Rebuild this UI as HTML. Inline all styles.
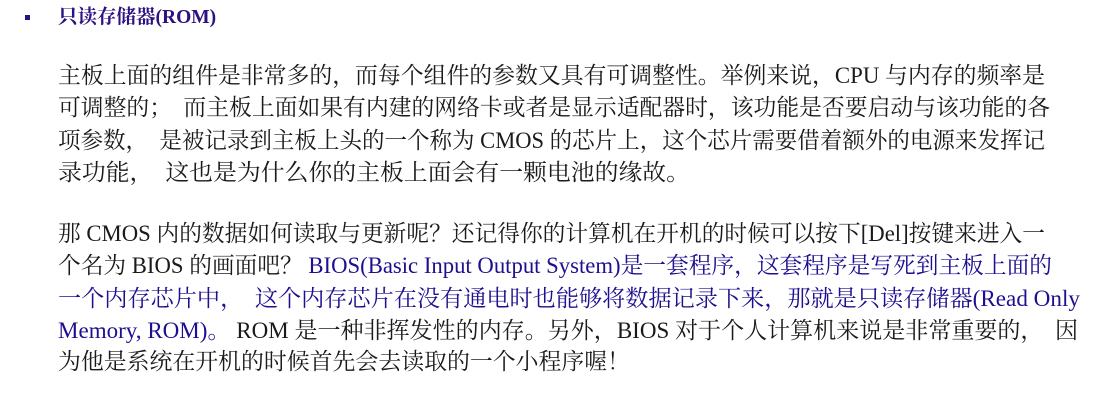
<!DOCTYPE html>
<html><head><meta charset="utf-8"><style>
html,body{margin:0;padding:0;background:#fff;width:1108px;height:403px;overflow:hidden}
body{position:relative;font-family:"Liberation Serif","Noto Serif CJK SC",serif;color:#1a1a1a}
.l{position:absolute;left:58px;height:32px;line-height:32px;font-size:23px;white-space:nowrap;transform-origin:0 50%}
.b{color:#1d0f8f}
h1{position:absolute;left:58px;top:5px;margin:0;font-size:19.5px;line-height:26px;font-weight:bold;color:#2b1280}
.sq{position:absolute;left:25px;top:15px;width:5px;height:5px;background:#2b1280}
</style></head><body>
<div class="sq"></div>
<h1>只读存储器(ROM)</h1>
<div class="l" style="top:60px" title="987">主板上面的组件是非常多的，而每个组件的参数又具有可调整性。举例来说，CPU 与内存的频率是</div>
<div class="l" style="top:92px" title="992">可调整的；　而主板上面如果有内建的网络卡或者是显示适配器时，该功能是否要启动与该功能的各</div>
<div class="l" style="top:125px" title="987">项参数，　是被记录到主板上头的一个称为 CMOS 的芯片上，这个芯片需要借着额外的电源来发挥记</div>
<div class="l" style="top:157px" title="632">录功能，　这也是为什么你的主板上面会有一颗电池的缘故。</div>
<div class="l" style="top:218px" title="987">那 CMOS 内的数据如何读取与更新呢？还记得你的计算机在开机的时候可以按下[Del]按键来进入一</div>
<div class="l" style="top:250px" title="994">个名为 BIOS 的画面吧？ <span class="b">BIOS(Basic Input Output System)是一套程序，这套程序是写死到主板上面的</span></div>
<div class="l b" style="top:283px" title="1022">一个内存芯片中，　这个内存芯片在没有通电时也能够将数据记录下来，那就是只读存储器(Read Only</div>
<div class="l" style="top:315px" title="1020"><span class="b">Memory, ROM)。</span> ROM 是一种非挥发性的内存。另外，BIOS 对于个人计算机来说是非常重要的，　因</div>
<div class="l" style="top:346px" title="572">为他是系统在开机的时候首先会去读取的一个小程序喔！</div>
<script>
document.querySelectorAll('.l').forEach(function(e){
  var t=parseFloat(e.getAttribute('title'));e.removeAttribute('title');
  var r=document.createRange();r.selectNodeContents(e);var a=r.getBoundingClientRect().width;
  if(a>0){e.style.transform='scaleX('+(t/a)+')';}
});
</script>
</body></html>
